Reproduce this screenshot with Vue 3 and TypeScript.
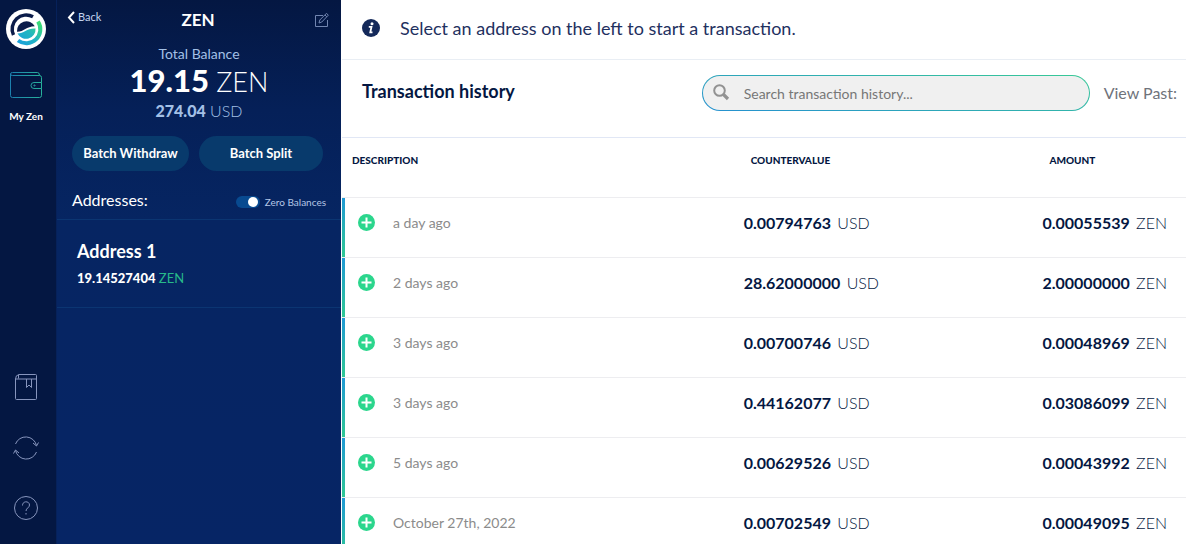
<script setup lang="ts">
import { ref } from 'vue'

interface Transaction {
  when: string
  countervalue: string
  amount: string
}

const transactions: Transaction[] = [
  { when: 'a day ago', countervalue: '0.00794763', amount: '0.00055539' },
  { when: '2 days ago', countervalue: '28.62000000', amount: '2.00000000' },
  { when: '3 days ago', countervalue: '0.00700746', amount: '0.00048969' },
  { when: '3 days ago', countervalue: '0.44162077', amount: '0.03086099' },
  { when: '5 days ago', countervalue: '0.00629526', amount: '0.00043992' },
  { when: 'October 27th, 2022', countervalue: '0.00702549', amount: '0.00049095' },
]

const showZeroBalances = ref(true)
const query = ref('')
</script>

<template>
  <div class="app">
    <nav class="rail" aria-label="Main">
      <a class="logo" href="#" aria-label="Home">
        <svg width="40" height="40" viewBox="0 0 40 40" fill="none">
          <defs>
            <linearGradient id="swirl" x1="12" y1="34" x2="34" y2="12" gradientUnits="userSpaceOnUse">
              <stop offset="0" stop-color="#1aa0dc" />
              <stop offset=".5" stop-color="#22b6c0" />
              <stop offset="1" stop-color="#3ee06c" />
            </linearGradient>
          </defs>
          <circle cx="20" cy="20" r="20" fill="#fff" />
          <path d="M7.500 26A14 14 0 0 1 27 7.800" stroke="#0b1c4a" stroke-width="3.500" />
          <path d="M32 12.500A14 14 0 0 1 12 31.500" stroke="url(#swirl)" stroke-width="4" />
          <path d="M11 22.800A9.500 9.500 0 0 1 28.800 17.300C20 17.500 18 23 11 22.800Z" fill="#0b1c4a" />
          <path d="M11.500 24.500C18 24.500 21 19 29.500 19.500A9.500 9.500 0 0 1 11.500 24.500Z" fill="url(#swirl)" />
        </svg>
      </a>
      <a class="wallet" href="#">
        <svg width="32" height="26" viewBox="0 0 32 26" fill="none" stroke="url(#walletLine)">
          <defs>
            <linearGradient id="walletLine" x1="0" y1="0" x2="32" y2="0" gradientUnits="userSpaceOnUse">
              <stop offset="0" stop-color="#1c80ae" />
              <stop offset="1" stop-color="#27b29a" />
            </linearGradient>
          </defs>
          <path d="M31.500 10.500V5.500Q31.500 3.500 29.500 3.500H2.500Q.500 3.500 .500 2Q.500 .500 2.500 .500H27.500Q29.500 .500 29.500 3.500M.500 2V23.500Q.500 25.500 2.500 25.500H29.500Q31.500 25.500 31.500 23.500V16.500" />
          <path d="M31.500 10.500H24A3 3 0 0 0 24 16.500H31.500Z" />
          <circle cx="24.500" cy="13.500" r=".6" />
        </svg>
        <span>My Zen</span>
      </a>
      <div class="rail-foot">
        <a href="#" aria-label="Address book">
          <svg width="24" height="28" viewBox="0 0 24 28" fill="none" stroke="#8795bd">
            <path d="M1.500 6V25.500Q1.500 26.500 2.500 26.500H21.500Q22.500 26.500 22.500 25.500V2.500Q22.500 1.500 21.500 1.500H5Q1.500 2 1.500 6H22.500M4.500 1.800V5.500M12.500 6V14.500L15 12L17.500 14.500V6" />
          </svg>
        </a>
        <a href="#" aria-label="Sync">
          <svg width="26" height="26" viewBox="0 0 26 26" fill="none" stroke="#8795bd">
            <path d="M2.500 9A11 11 0 0 1 23.500 10.500M20 8L23.500 11L25.500 7.500M23.500 17A11 11 0 0 1 2.500 15.500M.500 18.500L2.500 15L6 18" />
          </svg>
        </a>
        <a href="#" aria-label="Help">
          <svg width="26" height="26" viewBox="0 0 26 26" fill="none" stroke="#8795bd">
            <circle cx="13" cy="13" r="11.500" />
            <path d="M9.500 10.500C9.500 5.500 16.500 5.800 16.500 10C16.500 12.800 13 13 13 16M13 18V19.500" />
          </svg>
        </a>
      </div>
    </nav>

    <aside class="panel">
      <header class="panel-head">
        <button class="back" type="button">
          <svg width="8" height="13" viewBox="0 0 8 13" fill="none" stroke="#fff" stroke-width="2">
            <path d="M7 1L2 6.500L7 12" />
          </svg>
          Back
        </button>
        <h1>ZEN</h1>
        <button class="edit" type="button" aria-label="Edit wallet">
          <svg width="14" height="16" viewBox="0 0 14 16" fill="none" stroke="#7185b0">
            <path d="M8 3.500H.500V14.500H12.500V8M4 11L4.800 8L11.500 1.300L13.300 3.200L6.800 10ZM10 3L11.800 4.800" />
          </svg>
        </button>
      </header>

      <section class="balance">
        <p class="balance-label">Total Balance</p>
        <p class="balance-main"><b>19.15</b> ZEN</p>
        <p class="balance-fiat"><b>274.04</b> USD</p>
      </section>

      <div class="actions">
        <button type="button">Batch Withdraw</button>
        <button type="button">Batch Split</button>
      </div>

      <div class="addresses-head">
        <h2>Addresses:</h2>
        <label class="toggle">
          <input v-model="showZeroBalances" type="checkbox" />
          Zero Balances
        </label>
      </div>

      <button class="address" type="button">
        <span class="address-name">Address 1</span>
        <span class="address-value"><b>19.14527404</b> ZEN</span>
      </button>
    </aside>

    <main class="main">
      <div class="notice">
        <svg width="18" height="18" viewBox="0 0 18 18">
          <circle cx="9" cy="9" r="9" fill="#14295a" />
          <circle cx="10" cy="4.700" r="1.500" fill="#fff" />
          <path d="M6.800 7.800H9.500L8.300 13.300H10.500" fill="none" stroke="#fff" stroke-width="1.800" />
        </svg>
        <p>Select an address on the left to start a transaction.</p>
      </div>

      <div class="toolbar">
        <h2>Transaction history</h2>
        <label class="search">
          <svg width="17" height="17" viewBox="0 0 17 17" fill="none" stroke="#929292">
            <circle cx="6.500" cy="6.500" r="5.300" stroke-width="2" />
            <path d="M10.500 10.500L15 15" stroke-width="3.200" />
          </svg>
          <input v-model="query" type="search" placeholder="Search transaction history..." aria-label="Search transaction history" />
        </label>
        <span class="past">View Past:</span>
      </div>

      <table class="history">
        <colgroup>
          <col class="col-description" />
          <col class="col-countervalue" />
          <col />
        </colgroup>
        <thead>
          <tr>
            <th scope="col">Description</th>
            <th scope="col">Countervalue</th>
            <th scope="col">Amount</th>
          </tr>
        </thead>
        <tbody>
          <tr v-for="(tx, i) in transactions" :key="i">
            <td>
              <div class="when">
                <svg width="17" height="17" viewBox="0 0 17 17">
                  <circle cx="8.500" cy="8.500" r="8.500" fill="#2bd68d" />
                  <path d="M8.500 3.500V13.500M3.500 8.500H13.500" stroke="#fff" stroke-width="2" />
                </svg>
                {{ tx.when }}
              </div>
            </td>
            <td><b>{{ tx.countervalue }}</b> USD</td>
            <td><b>{{ tx.amount }}</b> ZEN</td>
          </tr>
        </tbody>
      </table>
    </main>
  </div>
</template>

<style>
body {
  margin: 0;
}
</style>

<style scoped>
.app {
  display: flex;
  height: 100vh;
  overflow: hidden;
  background: #fff;
  color: #041742;
  font-family: Lato, "Liberation Sans", sans-serif;
}

h1,
h2,
p {
  margin: 0;
}

button {
  padding: 0;
  border: 0;
  background: none;
  color: inherit;
  font-family: inherit;
  cursor: pointer;
}

a {
  color: inherit;
  text-decoration: none;
}

svg {
  display: block;
  flex: none;
}

.rail {
  display: flex;
  flex: none;
  flex-direction: column;
  align-items: center;
  width: 57px;
  box-sizing: border-box;
  padding: 9px 4px 23px 0;
  border-right: 1px solid #06215a;
  background: #041742;
}

.wallet {
  display: flex;
  flex-direction: column;
  align-items: center;
  gap: 12px;
  margin-top: 23px;
  color: #fff;
  font-size: 10px;
  font-weight: 700;
  line-height: 12px;
}

.rail-foot {
  display: flex;
  flex-direction: column;
  align-items: center;
  gap: 34px;
  margin-top: auto;
}

.panel {
  flex: none;
  width: 284px;
  background: linear-gradient(#041742 0, #052058 110px, #062562 220px, #062565 100%);
  color: #fff;
}

.panel-head {
  display: grid;
  grid-template-columns: 1fr auto 1fr;
  align-items: center;
  height: 40px;
  padding: 0 12px 0 10px;
}

.panel-head h1 {
  font-size: 17px;
  font-weight: 700;
  line-height: 22px;
}

.back {
  display: flex;
  align-items: center;
  justify-self: start;
  gap: 3px;
  padding-bottom: 6px;
  color: #c3d3ef;
  font-size: 11px;
  line-height: 14px;
}

.edit {
  justify-self: end;
}

.balance {
  padding-top: 3px;
  color: #a3c0e6;
  text-align: center;
}

.balance-label {
  font-size: 14px;
  line-height: 22px;
}

.balance-main {
  color: #fff;
  font-size: 27px;
  font-weight: 300;
  line-height: 31px;
}

.balance-main b {
  font-size: 31px;
  font-weight: 900;
}

.balance-fiat {
  font-size: 16px;
  font-weight: 300;
  line-height: 28px;
}

.balance-fiat b {
  font-weight: 900;
}

.actions {
  display: grid;
  grid-template-columns: 117px 1fr;
  gap: 10px;
  padding: 11px 18px 0 15px;
}

.actions button {
  height: 35px;
  padding-bottom: 2px;
  border-radius: 18px;
  background: #083a6c;
  font-size: 13px;
  font-weight: 700;
}

.addresses-head {
  display: flex;
  align-items: center;
  justify-content: space-between;
  height: 49px;
  box-sizing: border-box;
  padding: 9px 15px 0;
  border-bottom: 1px solid #0b3572;
}

.addresses-head h2 {
  font-size: 16px;
  font-weight: 400;
  line-height: 20px;
}

.toggle {
  display: flex;
  align-items: center;
  gap: 5px;
  padding-top: 4px;
  color: #b5c7e6;
  font-size: 10px;
  line-height: 14px;
}

.toggle input {
  appearance: none;
  display: flex;
  width: 24px;
  height: 12px;
  box-sizing: border-box;
  margin: 0;
  padding: 1px 2px;
  border-radius: 6px;
  background: #084a90;
}

.toggle input::before {
  width: 10px;
  height: 10px;
  border-radius: 50%;
  background: #fff;
  content: "";
}

.toggle input:checked::before {
  margin-left: auto;
}

.address {
  display: flex;
  flex-direction: column;
  gap: 6px;
  width: 100%;
  padding: 20px 20px 19px;
  border-bottom: 1px solid #0b3572;
  text-align: left;
}

.address-name {
  font-size: 18px;
  font-weight: 700;
  line-height: 22px;
}

.address-value {
  color: #27b98a;
  font-size: 13px;
  line-height: 20px;
}

.address-value b {
  color: #fff;
  font-weight: 900;
}

.main {
  flex: 1;
  min-width: 0;
  padding-left: 1px;
}

.notice {
  display: flex;
  align-items: center;
  gap: 20px;
  height: 60px;
  box-sizing: border-box;
  padding: 0 20px 3px;
  border-bottom: 1px solid #e9eef4;
  color: #1f315f;
  font-size: 18px;
  line-height: 24px;
}

.toolbar {
  display: flex;
  align-items: center;
  gap: 14px;
  height: 78px;
  box-sizing: border-box;
  padding: 0 9px 12px 20px;
  border-bottom: 1px solid #e1e7f5;
}

.toolbar h2 {
  flex: 1;
  padding-bottom: 3px;
  font-size: 18px;
  font-weight: 700;
  line-height: 24px;
  white-space: nowrap;
}

.search {
  display: flex;
  flex: none;
  align-items: center;
  gap: 14px;
  width: 47.6%;
  height: 36px;
  box-sizing: border-box;
  padding: 0 16px 0 10px;
  border: 1px solid transparent;
  border-radius: 18px;
  background:
    linear-gradient(#f0f0f0, #f0f0f0) padding-box,
    linear-gradient(10deg, #2590d0, #38c996) border-box;
}

.search input {
  flex: 1;
  min-width: 0;
  padding: 2px 0 0;
  border: 0;
  outline: 0;
  background: none;
  color: #333;
  font: 14px/20px Lato, "Liberation Sans", sans-serif;
}

.search input::placeholder {
  color: #777;
  opacity: 1;
}

.past {
  color: #6f737b;
  font-size: 16px;
  line-height: 24px;
  white-space: nowrap;
}

.history {
  width: 100%;
  border-collapse: separate;
  border-spacing: 0;
  table-layout: fixed;
}

.col-description {
  width: 47%;
}

.col-countervalue {
  width: 35.4%;
}

.history th {
  height: 60px;
  box-sizing: border-box;
  padding: 0 12px 15px;
  border-bottom: 1px solid #ededf0;
  font-size: 10px;
  font-weight: 900;
  line-height: 14px;
  text-align: left;
  text-transform: uppercase;
}

.history th:first-child {
  padding-left: 10px;
}

.history td {
  height: 60px;
  box-sizing: border-box;
  padding: 0 5px 10px;
  border-bottom: 1px solid #ededf0;
  font-size: 16px;
  font-weight: 300;
  line-height: 24px;
  white-space: nowrap;
}

.history td:first-child {
  padding-left: 16px;
  background: linear-gradient(#1f99d5, #2fc894) left / 3px 100% no-repeat;
}

.history b {
  margin-right: 2px;
  font-weight: 700;
}

.when {
  display: flex;
  align-items: center;
  gap: 18px;
  color: #8b8b8b;
  font-size: 14px;
  font-weight: 400;
}
</style>
